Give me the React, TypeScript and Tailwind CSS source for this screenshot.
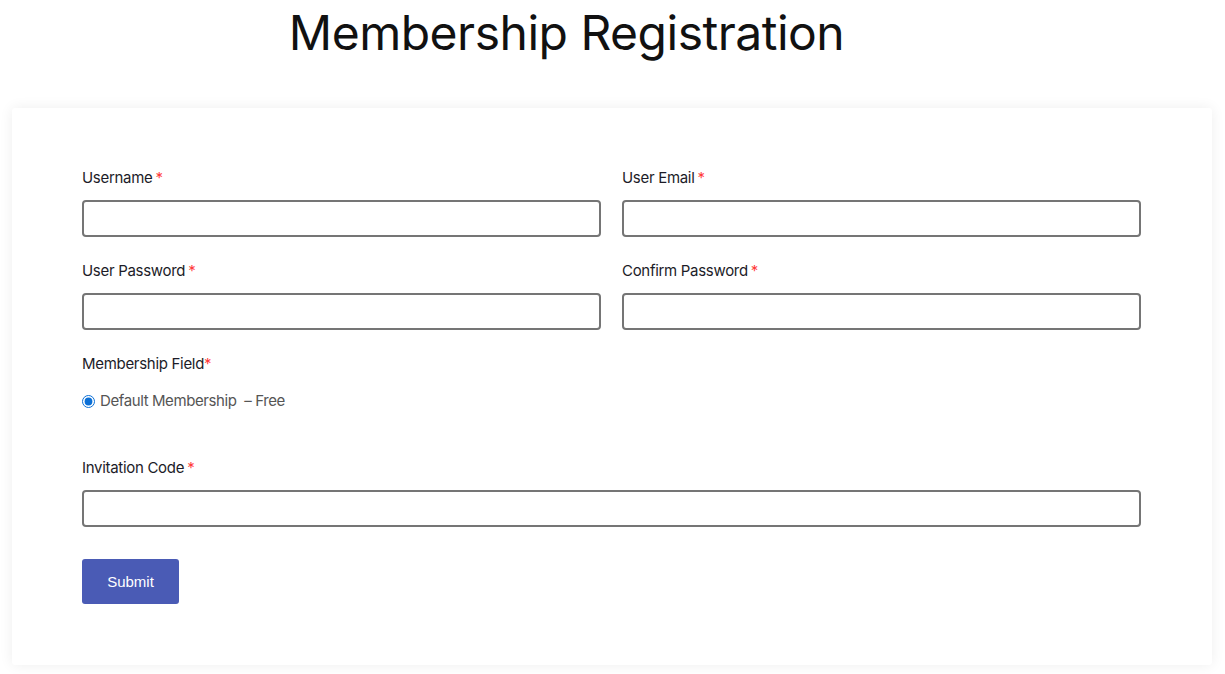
import type { ReactNode } from "react";

function Label({ children, tight }: { children: ReactNode; tight?: boolean }) {
  return (
    <label className="block text-[15px] leading-[22px] text-[#1c1c28] tracking-[-0.3px]">
      {children}
      <span className={`text-[#ff3b3b] ${tight ? "" : "ml-[3px]"}`}>*</span>
    </label>
  );
}

function Field({ label }: { label: string }) {
  return (
    <div className="flex flex-col gap-[11px]">
      <Label>{label}</Label>
      <input
        type="text"
        className="h-[37px] w-full rounded-[4px] border-2 border-[#757575] bg-white px-3 outline-none"
      />
    </div>
  );
}

export default function App() {
  return (
    <div className="min-h-[674px] bg-white font-['Inter','Noto_Sans',sans-serif]">
      <h1 className="pr-[92px] pt-[4px] text-center text-[48px] leading-[58px] font-normal tracking-[-0.5px] text-[#111]">
        Membership Registration
      </h1>

      <div className="ml-[12px] mr-[13px] mt-[46px] rounded-[3px] bg-white pl-[70px] pr-[71px] pt-[59px] pb-[61px] shadow-[0_0_14px_rgba(0,0,0,0.07)]">
        <div className="grid grid-cols-2 gap-x-[21px] gap-y-[23px]">
          <Field label="Username" />
          <Field label="User Email" />
          <Field label="User Password" />
          <Field label="Confirm Password" />
        </div>

        <div className="mt-[23px]">
          <Label tight>Membership Field</Label>
          <div className="mt-[15px] flex items-center gap-[5px] text-[15px] leading-[22px] tracking-[-0.4px] text-[#555]">
            <input type="radio" defaultChecked className="h-[13px] w-[13px] accent-[#0b6fd6]" />
            <span>Default Membership&nbsp; – Free</span>
          </div>
        </div>

        <div className="mt-[45px] flex flex-col gap-[11px]">
          <Label>Invitation Code</Label>
          <input
            type="text"
            className="h-[37px] w-full rounded-[4px] border-2 border-[#757575] bg-white px-3 outline-none"
          />
        </div>

        <button className="mt-[32px] h-[45px] w-[97px] rounded-[3px] bg-[#4a5bb5] pt-[2px] font-['Liberation_Sans',Arial,sans-serif] text-[15px] text-white">
          Submit
        </button>
      </div>
    </div>
  );
}
